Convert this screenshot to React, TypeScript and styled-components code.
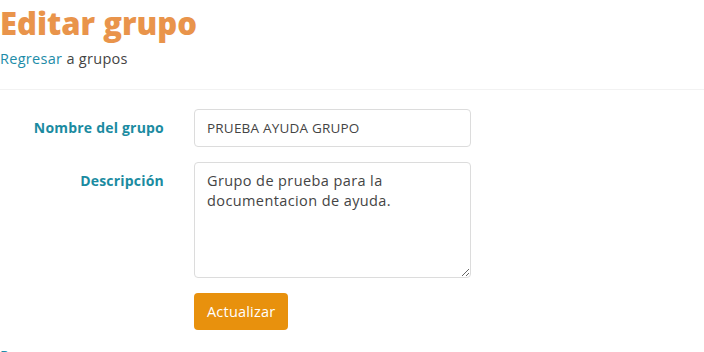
import styled, { createGlobalStyle } from 'styled-components';

const GlobalStyle = createGlobalStyle`
  html, body {
    margin: 0;
    padding: 0;
    background: #fff;
    font-family: "Open Sans", "Liberation Sans", sans-serif;
    overflow: hidden;
  }
`;

const Page = styled.div`
  width: 704px;
  height: 352px;
  overflow: hidden;
`;

const Title = styled.h1`
  margin: 0;
  padding-top: 2px;
  font-size: 31px;
  line-height: 42px;
  font-weight: 800;
  color: #e9944b;
`;

const BackLine = styled.div`
  margin-top: 5px;
  font-size: 14.5px;
  line-height: 20px;
  letter-spacing: 0.3px;
  color: #444;
`;

const Link = styled.a`
  color: #1d8ca8;
  text-decoration: none;
`;

const Divider = styled.hr`
  margin: 20px 0 0;
  border: 0;
  border-top: 1px solid #f2f2f2;
`;

const Form = styled.form`
  display: grid;
  grid-template-columns: 164px 277px;
  column-gap: 30px;
  row-gap: 15px;
  padding-top: 19px;
`;

const Label = styled.label<{ $offset: number }>`
  text-align: right;
  font-size: 14px;
  font-weight: 700;
  letter-spacing: 0.2px;
  color: #1b8ba1;
  padding-top: ${(p) => p.$offset}px;
`;

const Input = styled.input`
  box-sizing: border-box;
  height: 38px;
  width: 277px;
  padding: 0 12px;
  border: 1px solid #dcdcdc;
  border-radius: 4px;
  font-family: inherit;
  font-size: 13.5px;
  letter-spacing: 0.2px;
  color: #444;
  outline: none;
`;

const TextArea = styled.textarea`
  box-sizing: border-box;
  height: 116px;
  width: 277px;
  padding: 8px 12px;
  border: 1px solid #dcdcdc;
  border-radius: 4px;
  font-family: inherit;
  font-size: 14.5px;
  letter-spacing: 0.4px;
  line-height: 20px;
  color: #444;
  outline: none;
  resize: vertical;
`;

const Actions = styled.div`
  grid-column: 2;
`;

const Button = styled.button`
  height: 37px;
  padding: 0 13px;
  border: 0;
  border-radius: 4px;
  background: #e8910d;
  color: #fff;
  font-family: inherit;
  font-size: 14.5px;
  letter-spacing: 0.2px;
  font-weight: 500;
  cursor: pointer;
`;

const Footer = styled.div`
  margin-top: 16px;
  font-size: 14.5px;
  line-height: 20px;
  letter-spacing: 0.3px;
  color: #444;
`;

const App = () => {
  return (
    <Page>
      <GlobalStyle />
      <Title>Editar grupo</Title>
      <BackLine>
        <Link href="#">Regresar</Link> a grupos
      </BackLine>
      <Divider />
      <Form onSubmit={(e) => e.preventDefault()}>
        <Label $offset={9}>Nombre del grupo</Label>
        <Input defaultValue="PRUEBA AYUDA GRUPO" />
        <Label $offset={9}>Descripción</Label>
        <TextArea defaultValue="Grupo de prueba para la documentacion de ayuda." />
        <Actions>
          <Button type="submit">Actualizar</Button>
        </Actions>
      </Form>
      <Footer>
        <Link href="#">Regresar</Link> a grupos
      </Footer>
    </Page>
  );
};

export default App;
